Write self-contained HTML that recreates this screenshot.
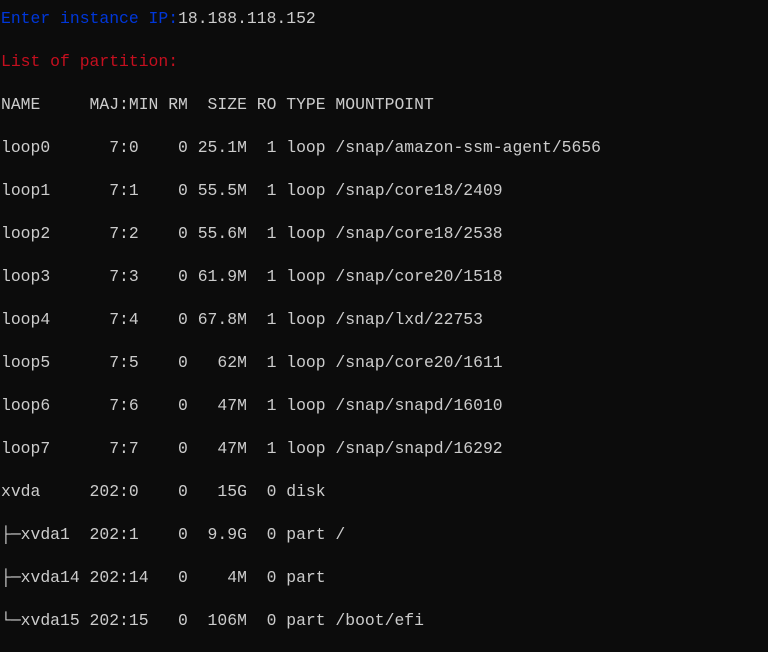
<!DOCTYPE html>
<html><head><meta charset="utf-8"><style>
html,body{margin:0;padding:0;background:#0c0c0c;width:768px;height:652px;overflow:hidden}
pre{margin:0;position:absolute;left:1px;top:-3px;font-family:"Liberation Mono","DejaVu Sans Mono",monospace;font-size:16.4px;line-height:43px;color:#cccccc;white-space:pre}
.b{color:#0037da}.r{color:#c50f1f}
</style></head><body><pre><span class="b">Enter instance IP:</span>18.188.118.152
<span class="r">List of partition:</span>
NAME     MAJ:MIN RM  SIZE RO TYPE MOUNTPOINT
loop0      7:0    0 25.1M  1 loop /snap/amazon-ssm-agent/5656
loop1      7:1    0 55.5M  1 loop /snap/core18/2409
loop2      7:2    0 55.6M  1 loop /snap/core18/2538
loop3      7:3    0 61.9M  1 loop /snap/core20/1518
loop4      7:4    0 67.8M  1 loop /snap/lxd/22753
loop5      7:5    0   62M  1 loop /snap/core20/1611
loop6      7:6    0   47M  1 loop /snap/snapd/16010
loop7      7:7    0   47M  1 loop /snap/snapd/16292
xvda     202:0    0   15G  0 disk
├─xvda1  202:1    0  9.9G  0 part /
├─xvda14 202:14   0    4M  0 part
└─xvda15 202:15   0  106M  0 part /boot/efi</pre></body></html>
